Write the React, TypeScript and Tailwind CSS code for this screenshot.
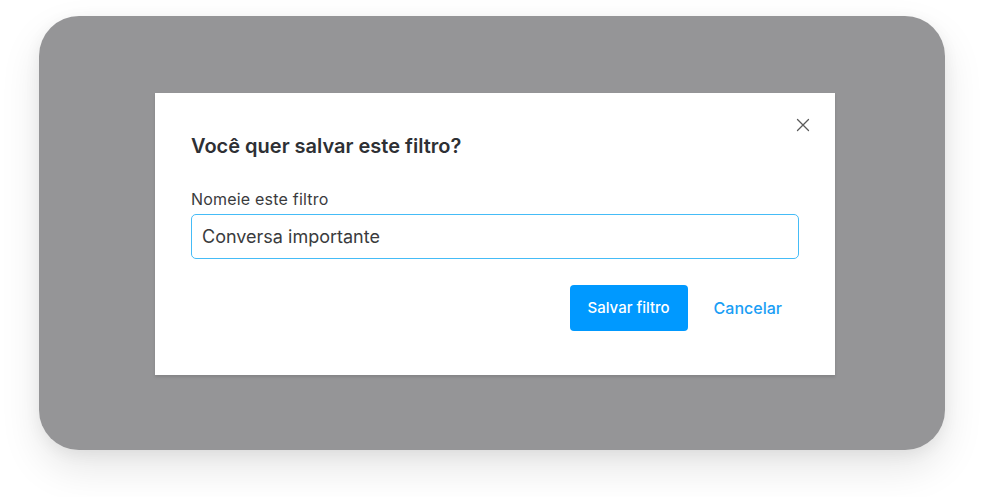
import React from "react";

export default function App() {
  return (
    <div
      className="w-[989px] h-[497px] bg-white pl-[39px] pt-[16px]"
      style={{ fontFamily: "Inter, 'Noto Sans', sans-serif" }}
    >
      <div className="w-[906px] h-[434px] rounded-[40px] bg-[#959597] shadow-[0_18px_40px_rgba(0,0,0,0.10),0_4px_16px_rgba(0,0,0,0.06)] pl-[116px] pt-[77px]">
        <div className="relative w-[680px] h-[282px] bg-white shadow-[0_2px_3px_rgba(0,0,0,0.12)] px-9 pt-[39px]">
          <button className="absolute right-[25px] top-[25px] w-[14px] h-[14px] flex items-center justify-center">
            <svg width="14" height="14" viewBox="0 0 14 14" fill="none">
              <path d="M1.5 1.5L12.5 12.5M12.5 1.5L1.5 12.5" stroke="#5a5a5a" strokeWidth="1.3" strokeLinecap="round" />
            </svg>
          </button>
          <h2 className="text-[20px] leading-[28px] font-semibold text-[#2e3034] tracking-[0px]">
            Você quer salvar este filtro?
          </h2>
          <div className="mt-[30px] text-[16px] leading-[18px] text-[#3a3b3d] tracking-[0.2px]">Nomeie este filtro</div>
          <div className="mt-[6px] h-[45px] rounded-[5px] border border-[#45bcf7] flex items-center px-[10px] text-[18px] text-[#3a3b3d]">
            Conversa importante
          </div>
          <div className="mt-[26px] flex justify-end items-center pr-[17px]">
            <button className="w-[118px] h-[46px] rounded-[4px] bg-[#0099ff] text-white text-[15px] font-medium">
              Salvar filtro
            </button>
            <button className="ml-[26px] text-[16px] font-medium text-[#1a9ef5]">Cancelar</button>
          </div>
        </div>
      </div>
    </div>
  );
}
